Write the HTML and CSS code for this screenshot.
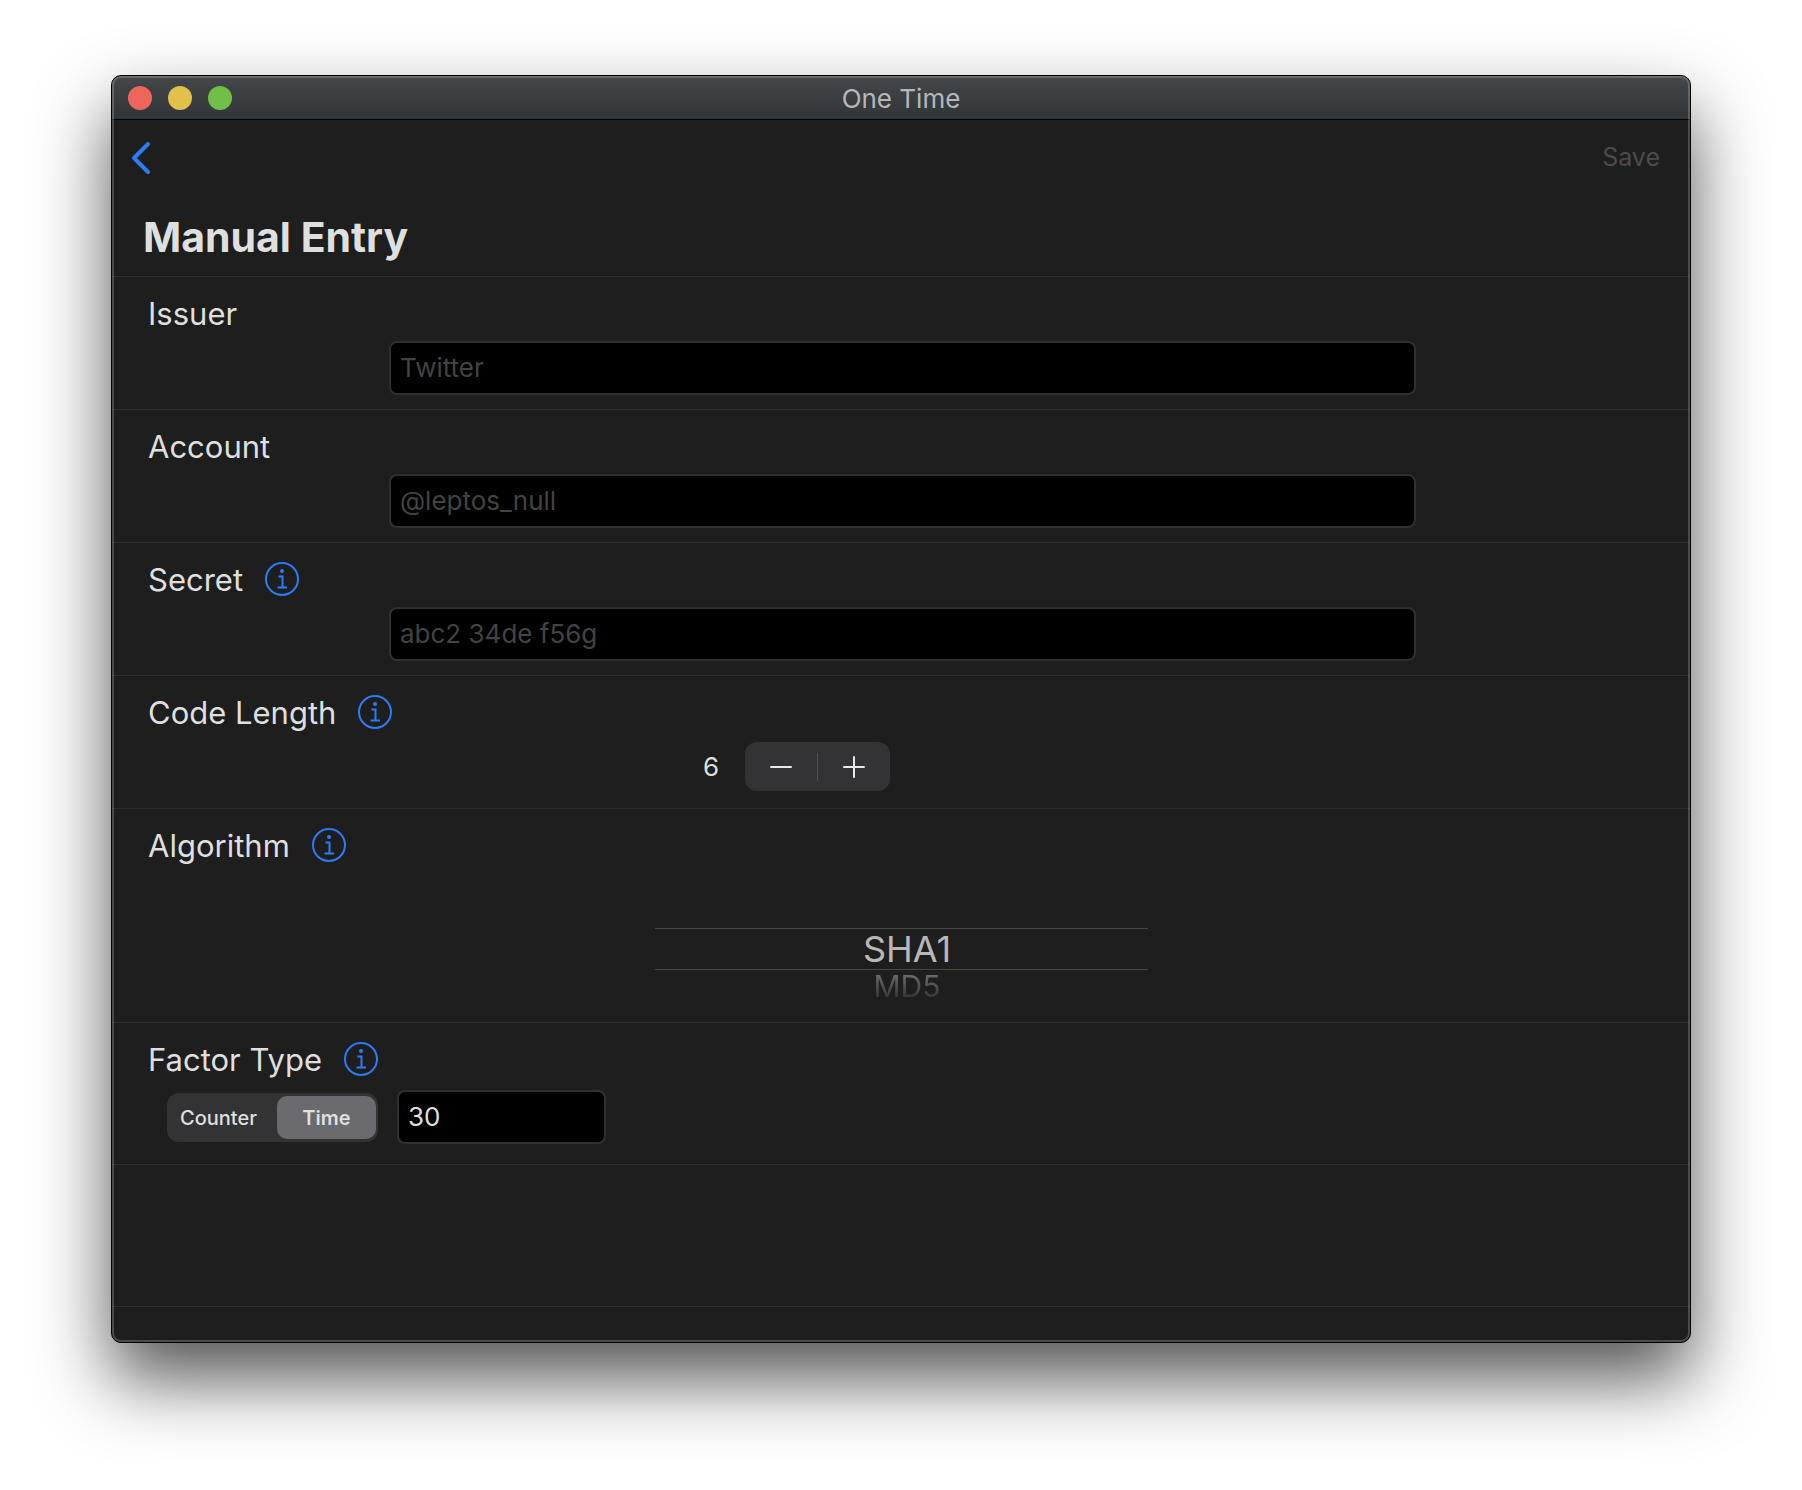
FILE: index.html
```html
<!DOCTYPE html>
<html lang="en">
<head>
<meta charset="utf-8">
<meta name="viewport" content="width=device-width, initial-scale=1">
<title>One Time</title>
<link rel="stylesheet" href="styles.css">
</head>
<body>
<svg class="sprite" aria-hidden="true">
  <symbol id="info" viewBox="0 0 34 34">
    <circle cx="17" cy="17" r="16" fill="none" stroke="currentColor" stroke-width="2"/>
    <circle cx="17" cy="9" r="2" fill="currentColor"/>
    <path d="M13.500 14.500H17.500V25M12.500 25.500H22" fill="none" stroke="currentColor" stroke-width="2"/>
  </symbol>
</svg>
<main class="window">
  <header class="titlebar">
    <div class="lights">
      <button class="light close" type="button" aria-label="Close"></button>
      <button class="light minimize" type="button" aria-label="Minimize"></button>
      <button class="light zoom" type="button" aria-label="Zoom"></button>
    </div>
    <span class="title">One Time</span>
  </header>
  <form>
    <div class="head">
      <nav class="nav">
        <button class="back" type="button" aria-label="Back">
          <svg width="20" height="34" viewBox="0 0 20 34"><path d="M17 3L3 17L17 31" fill="none" stroke="currentColor" stroke-width="4" stroke-linecap="round" stroke-linejoin="round"/></svg>
        </button>
        <button class="save" type="submit" disabled>Save</button>
      </nav>
      <h1>Manual Entry</h1>
    </div>
    <section class="row">
      <div class="caption"><label for="issuer">Issuer</label></div>
      <div class="wide"><input class="field" id="issuer" type="text" placeholder="Twitter"></div>
    </section>
    <section class="row">
      <div class="caption"><label for="account">Account</label></div>
      <div class="wide"><input class="field" id="account" type="text" placeholder="@leptos_null"></div>
    </section>
    <section class="row">
      <div class="caption"><label for="secret">Secret</label><button class="info" type="button" aria-label="About Secret"><svg><use href="#info"/></svg></button></div>
      <div class="wide"><input class="field" id="secret" type="text" placeholder="abc2 34de f56g"></div>
    </section>
    <section class="row">
      <div class="caption"><span id="length-label">Code Length</span><button class="info" type="button" aria-label="About Code Length"><svg><use href="#info"/></svg></button></div>
      <div class="length" role="group" aria-labelledby="length-label">
        <output>6</output>
        <div class="stepper">
          <button type="button" aria-label="Decrease"><svg width="22" height="22" viewBox="0 0 22 22"><path d="M1 11H21"/></svg></button>
          <button type="button" aria-label="Increase"><svg width="22" height="22" viewBox="0 0 22 22"><path d="M1 11H21M11 1V21"/></svg></button>
        </div>
      </div>
    </section>
    <section class="row">
      <div class="caption"><span id="algorithm-label">Algorithm</span><button class="info" type="button" aria-label="About Algorithm"><svg><use href="#info"/></svg></button></div>
      <div class="picker" role="radiogroup" aria-labelledby="algorithm-label">
        <label class="choice current"><input type="radio" name="algorithm" checked><span>SHA1</span></label>
        <label class="choice next"><input type="radio" name="algorithm"><span>MD5</span></label>
      </div>
    </section>
    <section class="row">
      <div class="caption"><label for="factor">Factor Type</label><button class="info" type="button" aria-label="About Factor Type"><svg><use href="#info"/></svg></button></div>
      <div class="factor">
        <div class="segments">
          <label><input type="radio" name="type"><span>Counter</span></label>
          <label><input type="radio" name="type" checked><span>Time</span></label>
        </div>
        <input class="field short" id="factor" type="text" value="30">
      </div>
    </section>
    <div class="row blank"></div>
    <div class="foot"></div>
  </form>
</main>
</body>
</html>
```

FILE: styles.css
```css
* { box-sizing: border-box; }

body {
  margin: 0;
  padding: 75px 111px 147px;
  background: #fff;
  color: #dfdfdf;
  font-family: Inter, "Liberation Sans", sans-serif;
  font-size: 26px;
}

button, input { margin: 0; padding: 0; border: 0; background: none; color: inherit; font: inherit; }
svg { display: block; }
.sprite { display: none; }

.window {
  position: relative;
  border: 1px solid #000;
  border-radius: 10px;
  background: #1e1e1e;
  box-shadow: 0 36px 72px rgba(0, 0, 0, .67);
}

/* Light rim drawn over the window's edge */
.window::after {
  content: "";
  position: absolute;
  inset: 0;
  border: 2px solid rgba(255, 255, 255, .2);
  border-radius: 9px;
  pointer-events: none;
}

.titlebar {
  display: grid;
  grid-template-columns: 1fr auto 1fr;
  align-items: center;
  height: 44px;
  padding: 0 16px;
  border-bottom: 1px solid #000;
  border-radius: 9px 9px 0 0;
  background: linear-gradient(#43474a, #313538);
}
.lights { display: flex; gap: 16px; }
.light { width: 24px; height: 24px; border-radius: 50%; }
.close { background: #ee6559; }
.minimize { background: #e1c04c; }
.zoom { background: #72bf48; }
.title { padding-top: 2px; color: #b5b8ba; line-height: 32px; }

.head { padding: 16px 30px 0 19px; border-bottom: 1px solid #303030; }
.nav { display: flex; justify-content: space-between; align-items: center; height: 44px; }
.back { color: #2c7cf8; }
.save { padding-bottom: 2px; color: #4b4b4b; font-size: 25px; }
h1 { margin: 0; padding: 29px 0 11px 12px; font-size: 41px; line-height: 56px; font-weight: 700; }

.row { border-bottom: 1px solid #303030; }
.caption { display: flex; align-items: center; gap: 22px; padding: 17px 36px 9px; font-size: 31px; line-height: 38px; }
.caption > :first-child { padding-top: 1px; line-height: 37px; }
.info { color: #2c7cf8; }
.info svg { width: 34px; height: 34px; }

.field {
  display: block;
  width: 100%;
  height: 54px;
  padding: 0 9px 2px;
  border: 2px solid #303030;
  border-radius: 8px;
  background: #000;
}
.field::placeholder { color: #434343; opacity: 1; }
.wide { padding: 0 274px 14px 277px; }

.length {
  display: flex;
  justify-content: flex-end;
  align-items: center;
  gap: 26px;
  padding: 2px 0 17px;
  margin-right: calc(50% + 11px);
}
.stepper { display: flex; align-items: center; height: 49px; border-radius: 12px; background: #333335; }
.stepper button { display: grid; place-items: center; width: 72px; height: 28px; }
.stepper button + button { width: 73px; border-left: 1px solid #4f4f52; }
.stepper path { fill: none; stroke: #e8e8e8; stroke-width: 2; stroke-linecap: round; }

.picker { width: 493px; height: 149px; margin: 0 auto; padding-top: 55px; text-align: center; }
.choice { display: block; padding-left: 12px; }
.choice input, .segments input { position: absolute; opacity: 0; pointer-events: none; }
.current { border: solid #464646; border-width: 1px 0; color: #b8b8b8; font-size: 36px; line-height: 40px; }
.next { font-size: 30px; line-height: 32px; }
.next span { background: linear-gradient(#6a6a6a 20%, #303030 90%); background-clip: text; color: transparent; }

.factor { display: flex; align-items: center; gap: 19px; padding: 3px 55px 20px; }
.segments { display: flex; height: 49px; padding: 3px 2px; border-radius: 12px; background: #333335; font-size: 20px; font-weight: 500; }
.segments label { display: flex; }
.segments span { display: grid; place-items: center; width: 99px; padding-top: 2px; border-radius: 10px; }
.segments label:first-child { padding-right: 9px; }
.segments :checked + span { background: #6b6a6f; font-weight: 600; }
.short { width: 209px; }

.blank { height: 142px; }
.foot { height: 35px; }
```
